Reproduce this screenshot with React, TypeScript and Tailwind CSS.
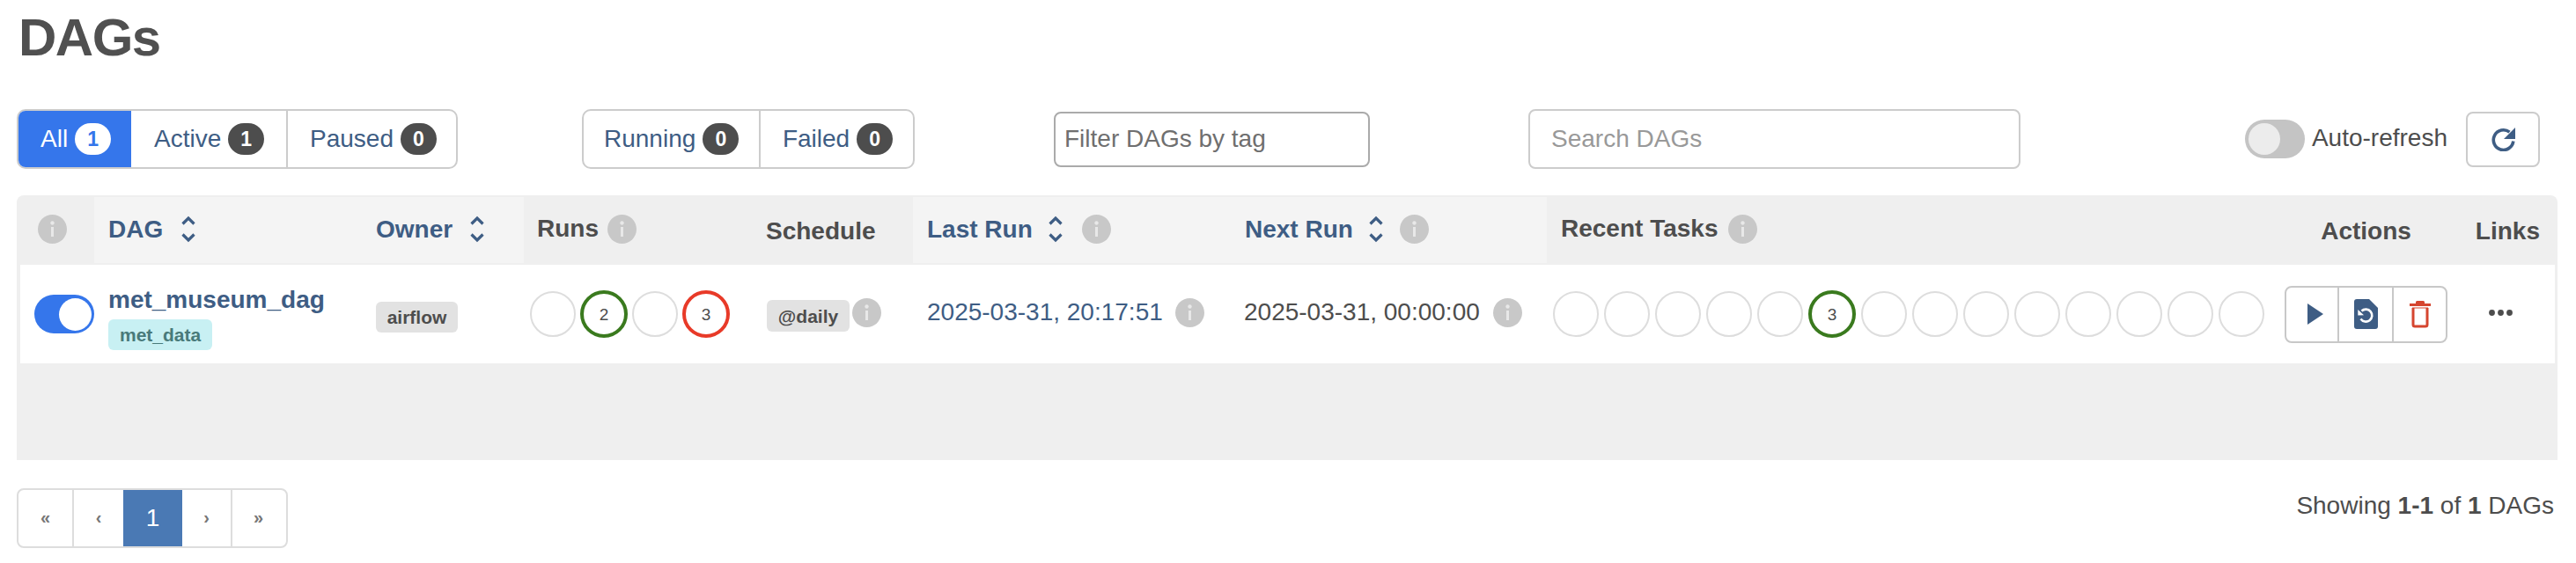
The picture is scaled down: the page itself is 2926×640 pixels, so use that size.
const NAVY = "#3e5d84";

function Info() {
  return (
    <svg width="33" height="33" viewBox="0 0 33 33" className="shrink-0">
      <circle cx="16.5" cy="16.5" r="16.5" fill="#c8c8c8" />
      <circle cx="16.5" cy="9.5" r="2.2" fill="#e8e8e8" />
      <rect x="15" y="14" width="3" height="11" fill="#e8e8e8" />
    </svg>
  );
}

function Sort() {
  return (
    <svg width="16" height="31" viewBox="0 0 16 31" fill="none" stroke={NAVY} strokeWidth="3.2" className="shrink-0">
      <path d="M1.5 9.5 L8 3 L14.5 9.5" />
      <path d="M1.5 21.5 L8 28 L14.5 21.5" />
    </svg>
  );
}

function Badge({ n, active }: { n: number; active?: boolean }) {
  return (
    <span
      className={
        "ml-2 flex h-[36px] w-[41px] items-center justify-center rounded-full text-[23px] font-bold " +
        (active ? "bg-white text-[#3576eb]" : "bg-[#4d4d4d] text-white")
      }
    >
      {n}
    </span>
  );
}

function Tab({ label, n, w, pl, active, last }: { label: string; n: number; w: string; pl: string; active?: boolean; last?: boolean }) {
  return (
    <div
      className={
        "flex h-full items-center " +
        pl +
        " " +
        w +
        (active ? " bg-[#3576eb] text-white" : " text-[#3e5d84]") +
        (last ? "" : " border-r-2 border-[#cccccc]")
      }
    >
      {label}
      <Badge n={n} active={active} />
    </div>
  );
}

function Circle({ n, color }: { n?: number; color?: string }) {
  if (n !== undefined) {
    return (
      <div
        className={
          "flex h-[54px] w-[54px] shrink-0 items-center justify-center rounded-full border-4 bg-white text-[19px] text-[#4d4d4d] " +
          color
        }
      >
        {n}
      </div>
    );
  }
  return <div className="h-[52px] w-[52px] shrink-0 rounded-full border-2 border-[#dddddd] bg-white" />;
}

function PageCell({ label, w, border }: { label: string; w: string; border?: boolean }) {
  return (
    <div
      className={
        "flex h-full items-center justify-center pb-[2px] text-[20px] font-bold text-[#777777] " +
        w +
        (border ? " border-r-2 border-[#dddddd]" : "")
      }
    >
      {label}
    </div>
  );
}

export default function App() {
  return (
    <div className="h-[640px] w-[2926px] overflow-hidden bg-white pl-[19px] pr-[21px] text-[28px] leading-none text-[#4d4d4d] [font-family:'Liberation_Sans',Arial,sans-serif]">
      <h1 className="ml-[2px] h-[124px] pt-[13px] text-[60px] font-bold leading-[60px] tracking-[-1.5px] text-[#505050]">DAGs</h1>

      <div className="flex h-[68px] items-center pr-[20px]">
        <div className="flex h-full w-[501px] items-center overflow-hidden rounded-[10px] border-2 border-[#cccccc]">
          <div className="-my-[2px] -ml-[2px] flex h-[68px] w-[130px] items-center bg-[#3576eb] pl-[27px] text-white">
            All
            <Badge n={1} active />
          </div>
          <Tab label="Active" n={1} w="w-[178px]" pl="pl-[26px]" />
          <Tab label="Paused" n={0} w="w-[191px]" pl="pl-[25px]" last />
        </div>
        <div className="ml-[141px] flex h-full w-[378px] items-center overflow-hidden rounded-[10px] border-2 border-[#cccccc]">
          <Tab label="Running" n={0} w="w-[202px]" pl="pl-[23px]" />
          <Tab label="Failed" n={0} w="w-[174px]" pl="pl-[25px]" last />
        </div>
        <div className="ml-[158px] flex h-[63px] w-[359px] items-center rounded-[8px] border-2 border-[#aaaaaa] pl-[10px] text-[#6f6f6f]">
          Filter DAGs by tag
        </div>
        <div className="ml-[180px] flex h-[68px] w-[559px] items-center rounded-[8px] border-2 border-[#cccccc] pl-[24px] text-[#999999]">
          Search DAGs
        </div>
        <div className="ml-auto flex items-center">
          <div className="mr-[8px] flex h-[44px] w-[68px] items-center rounded-full bg-[#c4c4c4] pl-[4px]">
            <div className="h-[36px] w-[36px] rounded-full bg-[#ececec]" />
          </div>
          <span className="mb-[2px]">Auto-refresh</span>
          <div className="ml-[21px] flex h-[63px] w-[84px] items-center justify-center rounded-[8px] border-2 border-[#cccccc]">
            <svg width="27" height="27" viewBox="0 0 27 27" fill="none">
              <path d="M20.5 5.2 A11.3 11.3 0 1 0 24.8 15.5" stroke={NAVY} strokeWidth="3.6" />
              <path d="M27 0 L27 13 L14 13 Z" fill={NAVY} />
            </svg>
          </div>
        </div>
      </div>

      <div className="mt-[30px] h-[301px] w-[2886px] rounded-t-[8px] bg-[#efefef] pl-[4px]">
        <table className="w-[2879px] table-fixed border-separate border-spacing-0 text-left">
          <thead>
            <tr className="h-[79px]">
              <th className="w-[84px] pl-[20px] align-middle">
                <div className="-mt-[3px]"><Info /></div>
              </th>
              <th className="w-[304px] border-y-2 border-[#efefef] bg-[#f4f4f4] pl-[16px]">
                <div className="-mt-[2px] flex items-center font-bold text-[#3e5d84]">
                  DAG<span className="ml-[21px]"><Sort /></span>
                </div>
              </th>
              <th className="w-[184px] border-y-2 border-[#efefef] bg-[#f4f4f4] pl-[16px]">
                <div className="-mt-[2px] flex items-center font-bold text-[#3e5d84]">
                  Owner<span className="ml-[20px]"><Sort /></span>
                </div>
              </th>
              <th className="w-[260px] pl-[15px]">
                <div className="-mt-[3px] flex items-center font-bold">
                  Runs<span className="ml-[10px]"><Info /></span>
                </div>
              </th>
              <th className="w-[182px] pl-[15px] pt-[2px] font-bold">Schedule</th>
              <th className="w-[361px] border-y-2 border-[#efefef] bg-[#f4f4f4] pl-[16px]">
                <div className="-mt-[2px] flex items-center font-bold text-[#3e5d84]">
                  Last Run<span className="ml-[18px]"><Sort /></span><span className="ml-[22px]"><Info /></span>
                </div>
              </th>
              <th className="w-[359px] border-y-2 border-[#efefef] bg-[#f4f4f4] pl-[16px]">
                <div className="-mt-[2px] flex items-center font-bold text-[#3e5d84]">
                  Next Run<span className="ml-[18px]"><Sort /></span><span className="ml-[19px]"><Info /></span>
                </div>
              </th>
              <th className="w-[823px] pl-[16px]">
                <div className="-mt-[3px] flex items-center font-bold">
                  Recent Tasks<span className="ml-[12px]"><Info /></span>
                </div>
              </th>
              <th className="w-[215px] pt-[2px] text-center font-bold">Actions</th>
              <th className="w-[107px] pr-[17px] pt-[2px] text-right font-bold">Links</th>
            </tr>
          </thead>
          <tbody>
            <tr className="h-[112px] bg-white">
              <td className="pl-[16px]">
                <div className="flex h-[44px] w-[68px] items-center justify-end rounded-full bg-[#3576eb] pr-[3px]">
                  <div className="h-[37px] w-[37px] rounded-full bg-white" />
                </div>
              </td>
              <td className="pl-[16px]">
                <div className="flex flex-col items-start">
                  <span className="font-bold text-[#3e5d84]">met_museum_dag</span>
                  <span className="mt-[8px] mb-[-10px] flex h-[35px] items-center rounded-[6px] bg-[#c8f0f3] px-[13px] text-[21px] font-bold text-[#497a7a]">
                    met_data
                  </span>
                </div>
              </td>
              <td className="pl-[16px]">
                <span className="mt-[7px] flex h-[35px] w-[93px] items-center justify-center rounded-[6px] bg-[#e2e2e2] text-[21px] font-bold">
                  airflow
                </span>
              </td>
              <td className="pl-[7px]">
                <div className="flex items-center gap-[5px]">
                  <Circle />
                  <Circle n={2} color="border-[#3a7a1e]" />
                  <Circle />
                  <Circle n={3} color="border-[#e83a28]" />
                </div>
              </td>
              <td className="pl-[16px]">
                <div className="flex items-center">
                  <span className="mt-[4px] flex h-[36px] w-[94px] items-center justify-center rounded-[6px] bg-[#e2e2e2] text-[21px] font-bold">
                    @daily
                  </span>
                  <span className="ml-[3px] -mt-[3px]"><Info /></span>
                </div>
              </td>
              <td className="pl-[16px]">
                <div className="-mt-[4px] flex items-center text-[#3e5d84]">
                  2025-03-31, 20:17:51<span className="ml-[14px]"><Info /></span>
                </div>
              </td>
              <td className="pl-[15px]">
                <div className="-mt-[4px] flex items-center">
                  2025-03-31, 00:00:00<span className="ml-[15px]"><Info /></span>
                </div>
              </td>
              <td className="pl-[7px]">
                <div className="flex items-center gap-[6px]">
                  <Circle />
                  <Circle />
                  <Circle />
                  <Circle />
                  <Circle />
                  <Circle n={3} color="border-[#3a7a1e]" />
                  <Circle />
                  <Circle />
                  <Circle />
                  <Circle />
                  <Circle />
                  <Circle />
                  <Circle />
                  <Circle />
                </div>
              </td>
              <td>
                <div className="mx-auto flex h-[65px] w-[185px] items-stretch overflow-hidden rounded-[8px] border-2 border-[#c8c8c8]">
                  <div className="flex w-[60px] items-center justify-center border-r-2 border-[#c8c8c8] pl-[8px]">
                    <svg width="18" height="24" viewBox="0 0 18 24"><path d="M0 0 L18 12 L0 24 Z" fill={NAVY} /></svg>
                  </div>
                  <div className="flex w-[62px] items-center justify-center border-r-2 border-[#c8c8c8]">
                    <svg width="27" height="34" viewBox="0 0 27 34">
                      <path d="M3 0 H17 L27 10 V31 A3 3 0 0 1 24 34 H3 A3 3 0 0 1 0 31 V3 A3 3 0 0 1 3 0 Z" fill={NAVY} />
                      <path d="M8.5 13.5 A7 7 0 1 1 7.5 22.5" fill="none" stroke="#ffffff" strokeWidth="2.6" />
                      <path d="M4.3 12 L11 18.2 L4.3 18.6 Z" fill="#ffffff" />
                    </svg>
                  </div>
                  <div className="flex flex-1 items-center justify-center">
                    <svg width="24" height="31" viewBox="0 0 24 31">
                      <rect x="0" y="3" width="24" height="3" fill="#d5452f" />
                      <rect x="7" y="0" width="10" height="4" rx="1.5" fill="#d5452f" />
                      <path d="M4 8 V27 A2 2 0 0 0 6 29 H18 A2 2 0 0 0 20 27 V8" fill="none" stroke="#d5452f" strokeWidth="3" />
                      <path d="M3 8 H21" stroke="#d5452f" strokeWidth="1" />
                    </svg>
                  </div>
                </div>
              </td>
              <td className="pl-[32px]">
                <svg width="27" height="7" viewBox="0 0 27 7" fill="#4d4d4d" className="-mt-[3px]">
                  <circle cx="3.5" cy="3.5" r="3.4" />
                  <circle cx="13.5" cy="3.5" r="3.4" />
                  <circle cx="23.5" cy="3.5" r="3.4" />
                </svg>
              </td>
            </tr>
          </tbody>
        </table>
      </div>

      <div className="mt-[32px] flex items-start justify-between">
        <div className="flex h-[68px] w-[308px] items-center overflow-hidden rounded-[8px] border-2 border-[#dddddd]">
          <PageCell label="«" w="w-[63px]" border />
          <PageCell label="‹" w="w-[56px]" />
          <div className="-my-[2px] flex h-[68px] w-[67px] items-center justify-center bg-[#4a79b4] text-white">1</div>
          <PageCell label="›" w="w-[57px]" border />
          <PageCell label="»" w="w-[59px]" />
        </div>
        <div className="mr-[4px] mt-[6px] text-[28px] leading-[28px]">
          Showing <b>1-1</b> of <b>1</b> DAGs
        </div>
      </div>
    </div>
  );
}
